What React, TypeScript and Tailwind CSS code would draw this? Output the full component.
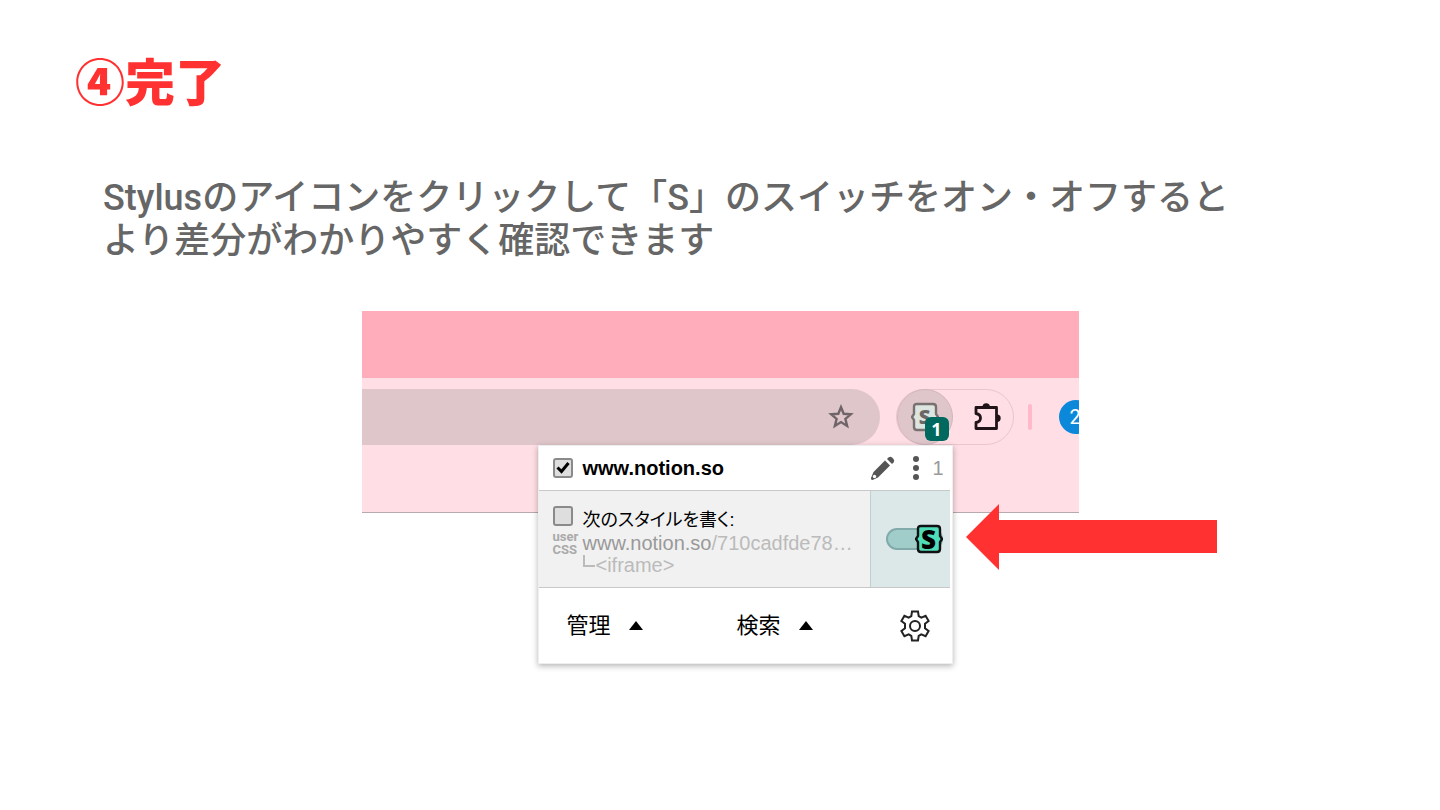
import { clsx } from 'clsx';

const cjk = "font-['Liberation_Sans','Noto_Sans_CJK_JP',sans-serif]";

const StarIcon = () => (
  <svg width="26" height="26" viewBox="0 0 26 26" fill="none" stroke="#6f6468" strokeWidth="2.4">
    <path d="M13 3.2l2.7 6.6 7.1.5-5.4 4.6 1.7 7L13 18.1l-6.1 3.8 1.7-7-5.4-4.6 7.1-.5z" />
  </svg>
);

const PuzzleIcon = () => (
  <svg width="30" height="30" viewBox="0 0 30 30" fill="none">
    <path
      d="M4 5.500h20.500v21H4v-6c3-.5 4.500-2 4.500-4.500S7 12 4 11.500z"
      stroke="#1f1519"
      strokeWidth="2.800"
      strokeLinejoin="round"
    />
    <path d="M10.500 5a3.700 3.700 0 0 1 7.400 0zM25 12.500a3.700 3.700 0 0 1 0 7.400z" fill="#1f1519" />
  </svg>
);

const BracketIcon = ({ fill, stroke }: { fill: string; stroke: string }) => (
  <svg width="28" height="30" viewBox="0 0 28 30" className="col-start-1 row-start-1">
    <path
      d="M6 2h16q3 0 3 3v7l2 3-2 3v7q0 3-3 3H6q-3 0-3-3v-7l-2-3 2-3V5q0-3 3-3z"
      fill={fill}
      stroke={stroke}
      strokeWidth="2.400"
    />
  </svg>
);

const PencilIcon = () => (
  <svg width="26" height="26" viewBox="0 0 26 26">
    <path d="M15 5.500l5 5L8 22.500l-5.500 2.500q-2 0-1.500-2l2.500-6z" fill="#555" />
    <path d="M17 4l1.500-1.500q2-1.500 3.500 0L23.500 4q1.500 1.500 0 3.500L22 9z" fill="#555" />
    <circle cx="4.500" cy="21.500" r="1.700" fill="#fff" />
  </svg>
);

const GearIcon = () => (
  <svg width="32" height="32" viewBox="0 0 32 32" fill="none" stroke="#222" strokeWidth="2">
    <path d="M13 1.500h6l.7 4.600 2.600 1.500 4.300-1.800 3 5.200-3.600 2.800v4.400l3.600 2.800-3 5.200-4.300-1.800-2.600 1.500-.7 4.600h-6l-.7-4.600-2.600-1.500-4.300 1.800-3-5.200L6 18.200v-4.400L2.400 11l3-5.200 4.300 1.800 2.600-1.500z" />
    <circle cx="16" cy="16" r="5" />
  </svg>
);

const UpArrow = () => (
  <svg width="14" height="9" viewBox="0 0 14 9">
    <path d="M7 0l7 9H0z" fill="#000" />
  </svg>
);

interface TickBoxProps {
  label: string;
  checked?: boolean;
}

const TickBox = ({ label, checked }: TickBoxProps) => (
  <span className="grid size-5 shrink-0">
    <input
      type="checkbox"
      aria-label={label}
      defaultChecked={checked}
      className="peer col-start-1 row-start-1 size-5 appearance-none rounded-[3px] border-2 border-[#8a8a8a] bg-[#dedede]"
    />
    <svg
      viewBox="0 0 20 20"
      fill="none"
      stroke="#000"
      strokeWidth="3"
      className="pointer-events-none invisible col-start-1 row-start-1 size-5 peer-checked:visible"
    >
      <path d="M4.500 9.500l4 4L15.500 5" />
    </svg>
  </span>
);

const Toolbar = () => (
  <div className="flex h-[67px] items-center overflow-hidden bg-[#ffdee5]">
    <div className="flex h-14 flex-1 items-center justify-end rounded-r-full bg-[#dfc6cb] pr-[26px]">
      <button aria-label="Bookmark">
        <StarIcon />
      </button>
    </div>
    <div className="ml-4 flex h-14 w-[118px] items-center rounded-full border border-[#eac5cd]">
      <button
        aria-label="Stylus"
        className="relative grid size-14 place-items-center rounded-full border border-[#d2b6bc] bg-[#dfc6cb] font-['Open_Sans',sans-serif]"
      >
        <BracketIcon fill="#dde5e1" stroke="#77716f" />
        <span className="col-start-1 row-start-1 text-xl leading-none font-extrabold text-[#6b6766]">S</span>
        <span className="absolute right-[3px] bottom-[3px] grid size-6 place-items-center rounded-md bg-[#00695f] text-lg leading-none font-bold text-white">
          1
        </span>
      </button>
      <button aria-label="Extensions" className="ml-[19px]">
        <PuzzleIcon />
      </button>
    </div>
    <div className="ml-[14px] h-[26px] w-1 rounded-full bg-[#ffb9c8]" />
    <div className="ml-[27px] w-5 shrink-0">
      <div className="flex size-[34px] items-center rounded-full bg-[#0b88da] pl-[11px] font-[Roboto,sans-serif] text-xl text-white">
        2
      </div>
    </div>
  </div>
);

const FooterButton = ({ label, className }: { label: string; className?: string }) => (
  <button className={clsx('flex items-center gap-[18px] text-[22px] leading-8', className)}>
    {label}
    <UpArrow />
  </button>
);

const StylusPopup = () => (
  <div
    className={clsx(
      'absolute top-[134px] left-[176px] w-[415px] border border-[#eee] bg-white text-black shadow-[0_2px_6px_rgba(0,0,0,0.3)]',
      cjk,
    )}
  >
    <div className="flex h-11 items-center pr-2 pl-[14px]">
      <label className="flex flex-1 items-center gap-[10px] text-xl font-bold">
        <TickBox label="www.notion.so" checked />
        www.notion.so
      </label>
      <button aria-label="Edit">
        <PencilIcon />
      </button>
      <button aria-label="More" className="ml-4">
        <svg width="8" height="24" viewBox="0 0 8 24" fill="#555">
          <circle cx="4" cy="3" r="3" />
          <circle cx="4" cy="12" r="3" />
          <circle cx="4" cy="21" r="3" />
        </svg>
      </button>
      <span className="ml-3 text-xl text-[#999]">1</span>
    </div>

    <div className="mr-[2px] flex h-[98px] border-y border-[#c8c8c8] bg-[#f1f1f1]">
      <div className="flex min-w-0 flex-1 gap-[5px] pt-[15px] pl-[14px]">
        <div className="w-[25px] shrink-0">
          <TickBox label="次のスタイルを書く" />
          <div className="mt-1 font-[Roboto,sans-serif] text-[13px] leading-[13px] font-bold text-[#aaa]">
            user
            <br />
            CSS
          </div>
        </div>
        <div className="min-w-0 pt-[2px] text-xl leading-[22px] text-[#bbb]">
          <a href="#" className="block text-lg leading-6 text-black [font-feature-settings:'palt']">
            次のスタイルを書く:
          </a>
          <a href="#" className="block whitespace-nowrap">
            <span className="text-[#999]">www.notion.so</span>/710cadfde78…
          </a>
          <a href="#" className="flex items-center">
            <span className="mr-px mb-2 h-3 w-3 border-b-2 border-l-2 border-[#bbb]" />
            &lt;iframe&gt;
          </a>
        </div>
      </div>
      <div className="flex w-20 items-center border-l border-[#c3cfcf] bg-[#dce8e8] pl-[15px]">
        <label className="relative flex items-center">
          <input
            type="checkbox"
            role="switch"
            aria-label="Style on"
            defaultChecked
            className="h-[22px] w-[57px] appearance-none rounded-full border-2 border-[#82aaaa] bg-[#a0cdca]"
          />
          <span className="absolute right-0 grid place-items-center font-['Open_Sans',sans-serif] text-[26px] leading-none font-extrabold">
            <BracketIcon fill="#4fdcb8" stroke="#111" />
            <span className="col-start-1 row-start-1">S</span>
          </span>
        </label>
      </div>
    </div>

    <div className="flex h-[75px] items-center pr-[21px] pl-7">
      <FooterButton label="管理" />
      <FooterButton label="検索" className="ml-[94px]" />
      <button aria-label="Settings" className="ml-auto">
        <GearIcon />
      </button>
    </div>
  </div>
);

const App = () => {
  return (
    <main className="min-h-screen bg-white pt-[55px] pb-10">
      <h1 className="ml-[75px] font-['Noto_Sans_CJK_JP',sans-serif] text-[50px] leading-[48px] font-black text-[#ff3131]">
        ④完了
      </h1>
      <p className="mt-[74px] ml-[103px] font-[Roboto,'Noto_Sans_CJK_JP',sans-serif] text-4xl leading-[43px] font-medium text-[#666]">
        Stylusのアイコンをクリックして「S」のスイッチをオン・オフすると
        <br />
        より差分がわかりやすく確認できます
      </p>

      <section className="relative mx-auto mt-12 h-[358px] w-full max-w-[717px]">
        <div className="h-[67px] bg-[#ffadbb]" />
        <div className="h-[135px] border-b border-[#b9a8ac] bg-[#ffdee5]">
          <div className="pt-[5px]">
            <Toolbar />
          </div>
        </div>
        <StylusPopup />
        <svg
          width="251"
          height="66"
          viewBox="0 0 251 66"
          className="absolute top-[193px] left-[604px]"
          aria-hidden="true"
        >
          <path d="M0 33L33 0v16h218v33H33v17z" fill="#ff3131" />
        </svg>
      </section>
    </main>
  );
};

export default App;
